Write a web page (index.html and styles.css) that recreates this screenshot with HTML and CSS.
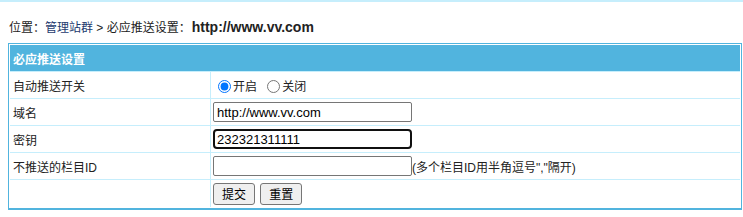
FILE: index.html
```html
<!DOCTYPE html>
<html lang="zh-CN">
<head>
    <meta charset="UTF-8">
    <title>必应推送设置</title>
    <link rel="stylesheet" href="styles.css">
</head>
<body>
    <div class="topline"></div>
    <div class="position">
        位置：<a href="#">管理站群</a> &gt; 必应推送设置：<strong>http://www.vv.com</strong>
    </div>
    <form>
        <table class="tablelist">
            <tr>
                <th colspan="2">必应推送设置</th>
            </tr>
            <tr>
                <td class="label">自动推送开关</td>
                <td>
                    <label><input type="radio" name="auto" checked>开启</label>
                    <label><input type="radio" name="auto">关闭</label>
                </td>
            </tr>
            <tr>
                <td class="label">域名</td>
                <td><input type="text" class="ipt" value="http://www.vv.com"></td>
            </tr>
            <tr>
                <td class="label">密钥</td>
                <td><input type="text" class="ipt focus" value="232321311111"></td>
            </tr>
            <tr>
                <td class="label">不推送的栏目ID</td>
                <td><input type="text" class="ipt" value=""><span class="tip">(多个栏目ID用半角逗号","隔开)</span></td>
            </tr>
            <tr class="last">
                <td class="label"></td>
                <td>
                    <button type="submit" class="btn">提交</button>
                    <button type="reset" class="btn">重置</button>
                </td>
            </tr>
        </table>
    </form>
</body>
</html>
```

FILE: styles.css
```css
body {
    margin: 0;
    font-family: "Liberation Sans", "Noto Sans CJK SC", sans-serif;
    font-size: 12px;
    color: #222;
    background: #fff;
}
.topline {
    border-top: 2px solid #c6eefc;
}
.position {
    padding: 17px 9px 7px;
    line-height: 16px;
}
.position a {
    color: #1d3a6e;
    text-decoration: none;
}
.position strong {
    font-size: 14px;
    margin-left: 1px;
}
form {
    margin: 0 0 0 8px;
}
.tablelist {
    width: 734px;
    border: 1px solid #51b4de;
    border-bottom-width: 2px;
    border-collapse: separate;
    border-spacing: 0;
    padding: 1px;
}
.tablelist th {
    background: #51b4de;
    color: #fff;
    text-align: left;
    font-weight: bold;
    height: 26px;
    padding: 0 0 0 3px;
    border-bottom: 1px solid #c6eefc;
}
.tablelist td {
    height: 26px;
    padding: 0 0 0 2px;
    border-bottom: 1px solid #c6eefc;
}
.tablelist td.label {
    width: 197px;
    padding-left: 3px;
    border-right: 1px solid #c6eefc;
}
.tablelist tr.last td {
    height: 27px;
    border-bottom: none;
}
label {
    margin-right: 2px;
}
input[type=radio] {
    margin: 3px 2px 0 5px;
    vertical-align: -2px;
}
.ipt {
    box-sizing: border-box;
    width: 199px;
    height: 20px;
    margin: 0;
    padding: 1px 3px;
    border: 1px solid #767676;
    border-radius: 2px;
    font-family: "Liberation Sans", sans-serif;
    font-size: 13px;
    color: #000;
    vertical-align: middle;
}
.ipt.focus {
    border: 2px solid #101010;
    border-radius: 4px;
    padding: 0 2px;
}
.tip {
    vertical-align: middle;
}
.btn {
    box-sizing: border-box;
    height: 22px;
    padding: 0 8px;
    margin: 0 2px 0 0;
    background: #efefef;
    border: 1px solid #767676;
    border-radius: 3px;
    font-family: "Liberation Sans", "Noto Sans CJK SC", sans-serif;
    font-size: 12px;
    color: #000;
    vertical-align: middle;
}
```
